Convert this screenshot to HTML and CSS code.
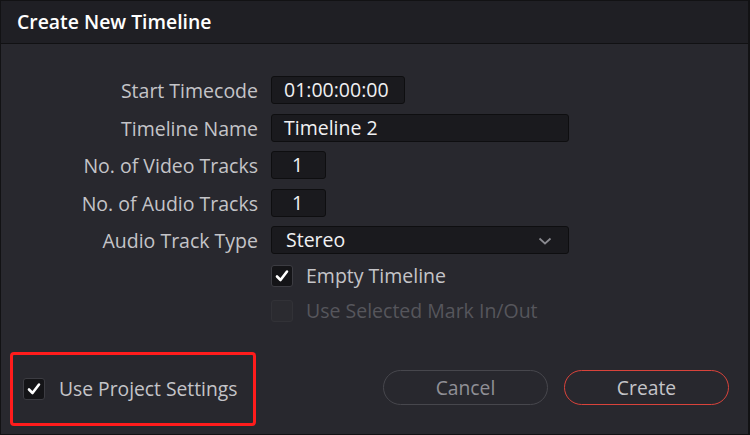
FILE: index.html
```html
<!DOCTYPE html>
<html>
<head>
<meta charset="utf-8">
<link rel="stylesheet" href="styles.css">
</head>
<body>
<div class="window">
  <div class="header"><span class="title">Create New Timeline</span></div>
  <div class="content">
    <div class="form">
      <div class="label">Start Timecode</div>
      <div class="field"><div class="input w-tc">01:00:00:00</div></div>
      <div class="label">Timeline Name</div>
      <div class="field"><div class="input w-full">Timeline 2</div></div>
      <div class="label">No. of Video Tracks</div>
      <div class="field"><div class="input w-num">1</div></div>
      <div class="label">No. of Audio Tracks</div>
      <div class="field"><div class="input w-num">1</div></div>
      <div class="label">Audio Track Type</div>
      <div class="field"><div class="input w-full select"><span>Stereo</span>
        <svg class="chev" width="14" height="8" viewBox="0 0 14 8"><path d="M1.5 1.5 L7 6.5 L12.5 1.5" fill="none" stroke="#8a8a90" stroke-width="1.7"/></svg></div></div>
    </div>
    <div class="checks">
      <div class="check-row">
        <span class="box checked"><svg width="16" height="16" viewBox="0 0 16 16"><path d="M3 8.5 L6.5 12 L13 3.5" fill="none" stroke="#fff" stroke-width="2.6" stroke-linecap="round" stroke-linejoin="round"/></svg></span>
        <span class="check-text">Empty Timeline</span>
      </div>
      <div class="check-row disabled">
        <span class="box"></span>
        <span class="check-text">Use Selected Mark In/Out</span>
      </div>
    </div>
    <div class="footer">
      <div class="highlight">
        <span class="box checked"><svg width="16" height="16" viewBox="0 0 16 16"><path d="M3 8.5 L6.5 12 L13 3.5" fill="none" stroke="#fff" stroke-width="2.6" stroke-linecap="round" stroke-linejoin="round"/></svg></span>
        <span class="proj-text">Use Project Settings</span>
      </div>
      <div class="buttons">
        <div class="btn cancel">Cancel</div>
        <div class="btn create">Create</div>
      </div>
    </div>
  </div>
</div>
</body>
</html>
```
FILE: styles.css
```css
html, body {
  margin: 0;
  padding: 0;
  background: #28282e;
}
body {
  font-family: "Open Sans", "Noto Sans", sans-serif;
}
.window {
  width: 750px;
  height: 435px;
  box-sizing: border-box;
  border: 1px solid #121214;
  border-right-width: 2px;
  background: #28282e;
  display: flex;
  flex-direction: column;
}
.header {
  height: 42px;
  flex: none;
  background: #1f1f24;
  border-bottom: 1px solid #111113;
  display: flex;
  align-items: center;
  padding-left: 16px;
}
.title {
  color: #ffffff;
  font-size: 19.4px;
  font-weight: 600;
  margin-top: -2px;
}
.content {
  flex: 1;
  display: flex;
  flex-direction: column;
  padding-top: 32px;
}
.form {
  display: grid;
  grid-template-columns: 257px 1fr;
  column-gap: 13px;
  row-gap: 9.5px;
  grid-auto-rows: 28px;
}
.label {
  color: #c4c4c8;
  font-size: 19.5px;
  text-align: right;
  line-height: 28px;
  margin-top: 1px;
}
.field {
  display: flex;
}
.input {
  box-sizing: border-box;
  height: 28px;
  background: #1a1a1e;
  border: 1px solid #0e0e10;
  border-radius: 3px;
  color: #f0f0f2;
  font-size: 19.5px;
  line-height: 26px;
  padding-left: 12px;
}
.w-tc { width: 134px; }
.w-full { width: 298px; }
.w-num { width: 55px; padding-left: 20px; }
.select {
  display: flex;
  justify-content: space-between;
  align-items: center;
  padding-left: 14px;
  padding-right: 16px;
}
.chev { margin-top: 1px; }
.checks {
  margin-top: 10px;
  padding-left: 270px;
  display: flex;
  flex-direction: column;
  gap: 12px;
}
.check-row {
  display: flex;
  align-items: center;
  height: 23px;
}
.box {
  box-sizing: border-box;
  width: 22px;
  height: 22px;
  border-radius: 3px;
  background: #2b2b30;
  border: 1px solid #323237;
  display: flex;
  align-items: center;
  justify-content: center;
  flex: none;
}
.box.checked {
  background: #141417;
  border: 1px solid #3c3c42;
}
.check-text {
  margin-left: 13px;
  color: #c4c4c8;
  font-size: 19.5px;
}
.disabled .check-text {
  color: #56565c;
}
.footer {
  margin-top: 30px;
  display: flex;
  align-items: flex-start;
  padding-left: 9px;
}
.highlight {
  box-sizing: border-box;
  width: 246px;
  height: 74px;
  border: 3px solid #ff1c1c;
  border-radius: 4px;
  display: flex;
  align-items: center;
  padding-left: 10px;
}
.proj-text {
  margin-left: 14px;
  color: #c4c4c8;
  font-size: 19.3px;
  margin-top: -2px;
}
.buttons {
  display: flex;
  gap: 16px;
  margin-left: 127px;
  margin-top: 18px;
}
.btn {
  box-sizing: border-box;
  width: 165px;
  height: 35px;
  border-radius: 18px;
  display: flex;
  align-items: center;
  justify-content: center;
  font-size: 19.3px;
  color: #909096;
  background: #28282e;
}
.cancel {
  border: 1px solid #47474d;
}
.create {
  border: 1.5px solid #d9433b;
  color: #c4c4c8;
}
```
